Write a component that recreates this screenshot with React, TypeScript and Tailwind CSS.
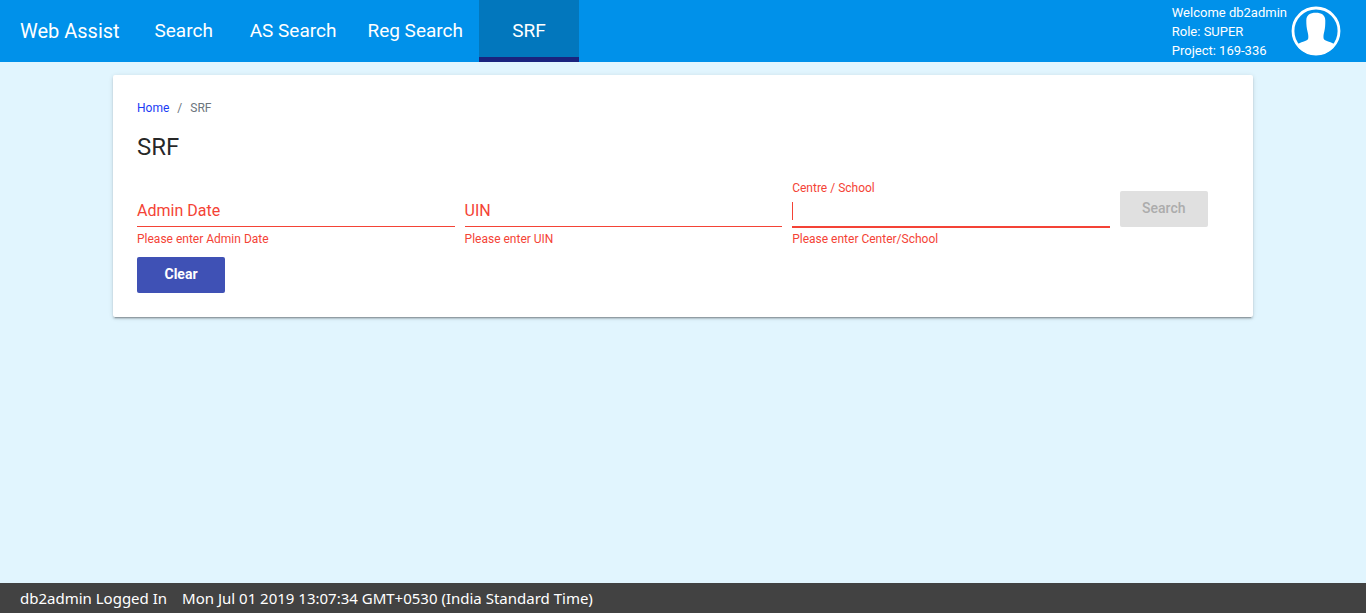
import { useState } from "react";
import { clsx } from "clsx";

const navItems = ["Search", "AS Search", "Reg Search", "SRF"];

type FieldProps = {
  id: string;
  label: string;
  error: string;
  focusOnLoad?: boolean;
};

function Field({ id, label, error, focusOnLoad = false }: FieldProps) {
  const [value, setValue] = useState("");
  const [focused, setFocused] = useState(focusOnLoad);
  const floating = focused || value !== "";

  return (
    <div className="w-[30%] pr-[10px] text-[#f44336]">
      <div className="relative pt-[18px]">
        <label
          htmlFor={id}
          className={clsx(
            "pointer-events-none absolute left-0",
            floating ? "top-0 text-xs" : "top-[19px] text-base",
          )}
        >
          {label}
        </label>
        {focused && value === "" && (
          <span className="pointer-events-none absolute left-0 top-[22px] h-[18px] w-px bg-[#f44336]" />
        )}
        <input
          id={id}
          type="text"
          value={value}
          autoFocus={focusOnLoad}
          onChange={(e) => setValue(e.target.value)}
          onFocus={() => setFocused(true)}
          onBlur={() => setFocused(false)}
          className={clsx(
            "block h-7 w-full bg-transparent text-base text-black/85 outline-none",
            value === "" ? "caret-transparent" : "caret-[#f44336]",
          )}
        />
        <div className="h-0.5">
          <div className={clsx("bg-[#f44336]", focused ? "h-0.5" : "h-px")} />
        </div>
      </div>
      <p className="mt-[3px] text-xs">{error}</p>
    </div>
  );
}

function Avatar() {
  return (
    <svg viewBox="0 0 50 50" className="size-[50px]" aria-hidden="true">
      <defs>
        <clipPath id="avatar-clip">
          <circle cx="25" cy="25" r="24" />
        </clipPath>
      </defs>
      <g clipPath="url(#avatar-clip)" fill="#fff">
        <path d="M24.800 6.800c5.800 0 9.500 2.400 9.500 7.700 0 4.500-.2 7.500-1 11-.6 2.500-.9 4-.8 6 0 1.600.6 2.300 2.300 3 3 1.200 6.200 2.200 10.200 4.500V50H5V39c4-2.300 7.200-3.300 10.200-4.500 1.700-.7 2.100-1.400 2.100-3 .1-2-.2-3.500-.8-6-.8-3.500-1.200-6.500-1.200-11 0-5.300 3.700-7.700 9.500-7.700z" />
      </g>
      <circle cx="25" cy="25" r="23" fill="none" stroke="#fff" strokeWidth="2.800" />
    </svg>
  );
}

export default function App() {
  return (
    <div className="flex min-h-screen flex-col bg-[#e1f5fe] font-['Roboto',sans-serif] text-black/85">
      <header className="flex h-[62px] items-stretch bg-[#0091ea] text-white">
        <h1 className="flex items-center pl-5 text-xl">Web Assist</h1>
        <nav className="ml-[14px] flex gap-px text-[19px]">
          {navItems.map((item) => (
            <a
              key={item}
              href="#"
              className={clsx(
                "flex min-w-[100px] items-center justify-center border-b-[5px] px-[15px] pt-1.5",
                item === "SRF" ? "border-[#1a237e] bg-[#0277bd]" : "border-transparent",
              )}
            >
              {item}
            </a>
          ))}
        </nav>
        <div className="ml-auto flex items-center gap-1 pr-[25px]">
          <div className="text-[13px] leading-[19px]">
            <p>Welcome db2admin</p>
            <p>Role: SUPER</p>
            <p>Project: 169-336</p>
          </div>
          <Avatar />
        </div>
      </header>

      <main className="grow px-4 pt-[13px]">
        <section className="mx-auto max-w-[1140px] rounded-xs bg-white p-6 shadow-[0_3px_1px_-2px_rgba(0,0,0,0.2),0_2px_2px_0_rgba(0,0,0,0.14),0_1px_5px_0_rgba(0,0,0,0.12)]">
          <ol className="flex gap-2 pt-px text-xs text-[#6c757d]">
            <li>
              <a href="#" className="text-[#1a3cf5]">
                Home
              </a>
            </li>
            <li aria-hidden="true">/</li>
            <li>SRF</li>
          </ol>
          <h2 className="mt-[15px] text-2xl">SRF</h2>
          <form className="mt-[17px]" onSubmit={(e) => e.preventDefault()}>
            <div className="flex items-start">
              <Field id="admin-date" label="Admin Date" error="Please enter Admin Date" />
              <Field id="uin" label="UIN" error="Please enter UIN" />
              <Field id="centre" label="Centre / School" error="Please enter Center/School" focusOnLoad />
              <button
                type="submit"
                disabled
                className="mt-[11px] h-9 w-[88px] rounded-xs bg-[#e0e0e0] pb-0.5 text-sm font-medium text-[#acacac]"
              >
                Search
              </button>
            </div>
            <button
              type="reset"
              className="mt-[10px] block h-9 w-[88px] rounded-xs bg-[#3f51b5] pb-0.5 text-sm font-bold text-white"
            >
              Clear
            </button>
          </form>
        </section>
      </main>

      <footer className="flex h-[30px] items-center gap-[15px] bg-[#424242] px-5 font-['Noto_Sans',sans-serif] text-[15px] text-white">
        <span>db2admin Logged In</span>
        <span>Mon Jul 01 2019 13:07:34 GMT+0530 (India Standard Time)</span>
      </footer>
    </div>
  );
}
